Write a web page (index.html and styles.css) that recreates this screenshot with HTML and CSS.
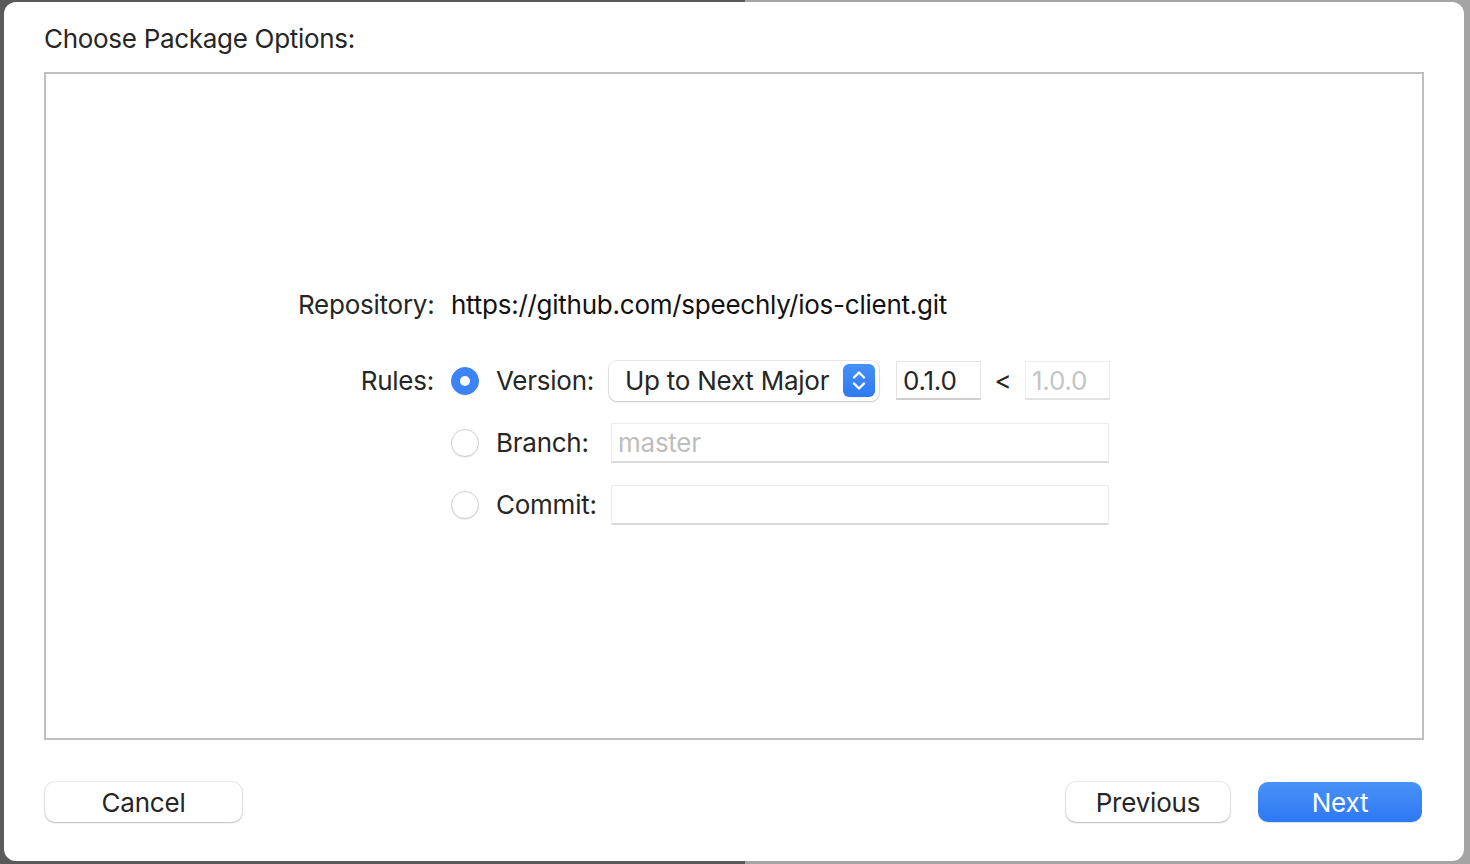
FILE: index.html
```html
<!DOCTYPE html>
<html>
<head>
<meta charset="utf-8">
<link rel="stylesheet" href="styles.css">
</head>
<body>
<div class="dialog">
  <div class="title">Choose Package Options:</div>
  <div class="panel">
    <div class="form">
      <div class="label repo-row">Repository:</div>
      <div class="repo repo-row">https://github.com/speechly/ios-client.git</div>

      <div class="label rules-label">Rules:</div>
      <div class="rules">
        <div class="rule">
          <span class="radio on"></span>
          <span class="rlabel">Version:</span>
          <div class="popup">
            <span class="popup-text">Up to Next Major</span>
            <span class="stepper">
              <svg width="32" height="33" viewBox="0 0 32 33"><path d="M11 13.5 L16 8.5 L21 13.5" fill="none" stroke="#fff" stroke-width="2.4" stroke-linecap="round" stroke-linejoin="round"/><path d="M11 19.5 L16 24.5 L21 19.5" fill="none" stroke="#fff" stroke-width="2.4" stroke-linecap="round" stroke-linejoin="round"/></svg>
            </span>
          </div>
          <div class="field ver">0.1.0</div>
          <span class="lt">&lt;</span>
          <div class="field ver disabled">1.0.0</div>
        </div>
        <div class="rule">
          <span class="radio"></span>
          <span class="rlabel">Branch:</span>
          <div class="field wide placeholder">master</div>
        </div>
        <div class="rule">
          <span class="radio"></span>
          <span class="rlabel">Commit:</span>
          <div class="field wide"></div>
        </div>
      </div>
    </div>
  </div>
  <div class="buttons">
    <button class="btn cancel">Cancel</button>
    <div class="spacer"></div>
    <button class="btn prev">Previous</button>
    <button class="btn next">Next</button>
  </div>
</div>
</body>
</html>
```
FILE: styles.css
```css
html, body {
  margin: 0;
  padding: 0;
  height: 864px;
  overflow: hidden;
}
body {
  background: linear-gradient(to right, #5a5a5a 0, #5a5a5a 50.7%, #a4a4a4 50.7%, #a4a4a4 100%);
  font-family: "Inter", "Liberation Sans", sans-serif;
  color: #262626;
  padding-top: 2px;
  box-sizing: border-box;
}
.dialog {
  margin-left: 4px;
  width: 1460px;
  height: 859px;
  background: #fff;
  border-radius: 12px;
  display: flex;
  flex-direction: column;
  box-sizing: border-box;
  padding: 0 40px 0 40px;
}
.title {
  font-size: 26px;
  letter-spacing: -0.3px;
  padding-top: 22px;
  height: 48px;
  box-sizing: border-box;
  line-height: 30px;
}
.panel {
  margin-top: 22px;
  height: 668px;
  border: 2px solid #bfbfbf;
  box-sizing: border-box;
  display: flex;
  align-items: center;
  padding-left: 252px;
}
.form {
  display: grid;
  grid-template-columns: 136px auto;
  column-gap: 17px;
  row-gap: 41px;
  align-items: start;
  font-size: 26px;
  letter-spacing: -0.25px;
}
.repo-row {
  margin-top: 2px;
}
.label {
  text-align: right;
  line-height: 30px;
}
.rules-label {
  margin-top: 5px;
}
.repo {
  line-height: 30px;
  color: #111;
}
.rules {
  display: flex;
  flex-direction: column;
  gap: 22px;
}
.rule {
  display: flex;
  align-items: center;
  height: 40px;
}
.radio {
  width: 26px;
  height: 26px;
  border-radius: 50%;
  border: 1px solid #cfcfcf;
  background: #fff;
  box-shadow: 0 1px 1px rgba(0,0,0,0.08);
  flex: none;
  position: relative;
}
.radio.on {
  background: #3b83f6;
  border-color: #3b83f6;
}
.radio.on::after {
  content: "";
  position: absolute;
  left: 8px;
  top: 8px;
  width: 10px;
  height: 10px;
  border-radius: 50%;
  background: #fff;
}
.rlabel {
  margin-left: 17px;
  width: 113px;
  flex: none;
}
.popup {
  width: 270px;
  height: 40px;
  box-sizing: border-box;
  border-radius: 8px;
  background: #fff;
  box-shadow: 0 0 0 1px rgba(0,0,0,0.09), 0 1px 2px rgba(0,0,0,0.15);
  display: flex;
  align-items: center;
  justify-content: space-between;
  padding: 0 4px 0 16px;
}
.stepper {
  width: 32px;
  height: 33px;
  border-radius: 6px;
  background: linear-gradient(#4690f8, #2f79f4);
  display: flex;
}
.field {
  height: 40px;
  box-sizing: border-box;
  border: 1px solid #e4e4e4;
  border-bottom: 2px solid #cfcfcf;
  background: #fff;
  padding: 0 6px;
  line-height: 37px;
}
.field.ver {
  width: 85px;
}
.rule .popup + .field {
  margin-left: 17px;
  height: 39px;
}
.lt {
  width: 44px;
  text-align: center;
}
.field.disabled {
  color: #c4c4c4;
  border-color: #efefef;
  border-bottom-color: #e2e2e2;
  height: 39px;
}
.field.wide {
  width: 498px;
  margin-left: 2px;
  border-color: #ececec;
  border-bottom-color: #dadada;
}
.placeholder {
  color: #bdbdbd;
}
.buttons {
  display: flex;
  align-items: center;
  margin-top: 42px;
  padding-left: 1px;
}
.spacer {
  flex: 1;
}
.btn {
  font-family: inherit;
  font-size: 26px;
  letter-spacing: -0.2px;
  height: 40px;
  border-radius: 10px;
  border: none;
  background: #fff;
  color: #262626;
  box-shadow: 0 0 0 1px rgba(0,0,0,0.08), 0 1px 2px rgba(0,0,0,0.2);
  padding: 0;
}
.cancel {
  width: 197px;
}
.prev {
  width: 164px;
}
.next {
  width: 164px;
  margin-left: 28px;
  margin-right: 2px;
  color: #fff;
  background: linear-gradient(#4a92f8, #2d78f4);
  box-shadow: 0 1px 1px rgba(0,0,0,0.12);
}
```
